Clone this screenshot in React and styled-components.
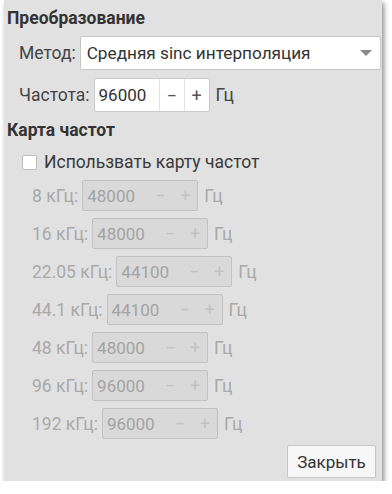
import styled, { createGlobalStyle } from "styled-components";

const GlobalStyle = createGlobalStyle`
  html, body {
    margin: 0;
    padding: 0;
    background: #ffffff;
  }
  body {
    font-family: Roboto, "Noto Sans", sans-serif;
  }
`;

const RATES = [
  { label: "8 кГц:", value: "48000" },
  { label: "16 кГц:", value: "48000" },
  { label: "22.05 кГц:", value: "44100" },
  { label: "44.1 кГц:", value: "44100" },
  { label: "48 кГц:", value: "48000" },
  { label: "96 кГц:", value: "96000" },
  { label: "192 кГц:", value: "96000" },
];

const SpinBox = ({ value, disabled }) => (
  <Spin disabled={disabled}>
    <SpinValue>{value}</SpinValue>
    <SpinButton disabled={disabled}>−</SpinButton>
    <SpinButton disabled={disabled}>+</SpinButton>
  </Spin>
);

const App = () => {
  return (
    <>
      <GlobalStyle />
      <Panel>
        {/* Resampling */}
        <Heading>Преобразование</Heading>
        <Row>
          <Label>Метод:</Label>
          <Combo>
            <span>Средняя sinc интерполяция</span>
            <svg width="12" height="7" viewBox="0 0 12 7">
              <path d="M0 0 L12 0 L6 6 Z" fill="#8a8a8a" />
            </svg>
          </Combo>
        </Row>
        <Row>
          <Label>Частота:</Label>
          <SpinBox value="96000" />
          <Unit>Гц</Unit>
        </Row>

        {/* Rate map */}
        <Heading second>Карта частот</Heading>
        <CheckRow>
          <CheckBox />
          <span>Использвать карту частот</span>
        </CheckRow>
        <MapList>
          {RATES.map((r) => (
            <MapRow key={r.label}>
              <Label disabled>{r.label}</Label>
              <SpinBox value={r.value} disabled />
              <Unit disabled>Гц</Unit>
            </MapRow>
          ))}
        </MapList>

        <Footer>
          <Button>Закрыть</Button>
        </Footer>
      </Panel>
    </>
  );
};

const Panel = styled.div`
  box-sizing: border-box;
  margin-left: 4px;
  width: 378px;
  height: 481px;
  background: #e1e1e1;
  box-shadow: 2px 3px 5px rgba(0, 0, 0, 0.45);
  padding: 8px 0 0 3px;
  color: #3a3a3a;
  font-size: 17.5px;
  display: flex;
  flex-direction: column;
`;

const Heading = styled.div`
  font-weight: bold;
  font-size: 17.5px;
  line-height: 20px;
  color: #333;
  margin-top: ${({ second }) => (second ? "8px" : "0")};
`;

const Row = styled.div`
  display: flex;
  align-items: center;
  gap: 4px;
  padding-left: 12px;
  margin-top: 8px;
`;

const Label = styled.span`
  color: ${({ disabled }) => (disabled ? "#a9a9a9" : "#444")};
  font-size: 17.5px;
  white-space: nowrap;
`;

const Combo = styled.div`
  box-sizing: border-box;
  flex: 1;
  height: 34px;
  margin-right: 1px;
  background: #fff;
  border: 1px solid #c6c6c6;
  border-radius: 2px;
  display: flex;
  align-items: center;
  justify-content: space-between;
  padding: 0 8px 0 6px;
  color: #333;
  font-size: 17.2px;
`;

const Spin = styled.div`
  box-sizing: border-box;
  display: flex;
  width: 116px;
  height: ${({ disabled }) => (disabled ? "31px" : "34px")};
  background: ${({ disabled }) => (disabled ? "#d9d9d9" : "#fff")};
  border: 1px solid ${({ disabled }) => (disabled ? "#c2c2c2" : "#cacaca")};
  border-radius: 2px;
  color: ${({ disabled }) => (disabled ? "#a3a3a3" : "#333")};
`;

const SpinValue = styled.div`
  flex: 1;
  display: flex;
  align-items: center;
  padding-left: 4px;
  font-size: 17px;
`;

const SpinButton = styled.div`
  width: 24px;
  display: flex;
  align-items: center;
  justify-content: center;
  font-size: 18px;
  color: ${({ disabled }) => (disabled ? "#c2c2c2" : "#555")};
  border-left: 1px solid ${({ disabled }) => (disabled ? "transparent" : "#e2e2e2")};
`;

const Unit = styled.span`
  margin-left: 2px;
  color: ${({ disabled }) => (disabled ? "#a9a9a9" : "#444")};
  font-size: 17.5px;
`;

const CheckRow = styled.div`
  display: flex;
  align-items: center;
  gap: 7px;
  padding-left: 15px;
  margin-top: 12px;
  color: #3a3a3a;
  font-size: 17.5px;
`;

const CheckBox = styled.span`
  box-sizing: border-box;
  width: 15px;
  height: 15px;
  background: #fff;
  border: 1px solid #bdbdbd;
  border-radius: 2px;
`;

const MapList = styled.div`
  display: flex;
  flex-direction: column;
  gap: 7px;
  padding-left: 25px;
  margin-top: 8px;
`;

const MapRow = styled.div`
  display: flex;
  align-items: center;
  gap: 4px;
`;

const Footer = styled.div`
  display: flex;
  justify-content: flex-end;
  padding-right: 6px;
  margin-top: 6px;
`;

const Button = styled.button`
  box-sizing: border-box;
  width: 89px;
  height: 33px;
  background: #f7f7f7;
  border: 1px solid #c6c6c6;
  border-radius: 2px;
  font-family: Roboto, "Noto Sans", sans-serif;
  font-size: 17px;
  color: #333;
  padding: 0;
`;

export default App;
